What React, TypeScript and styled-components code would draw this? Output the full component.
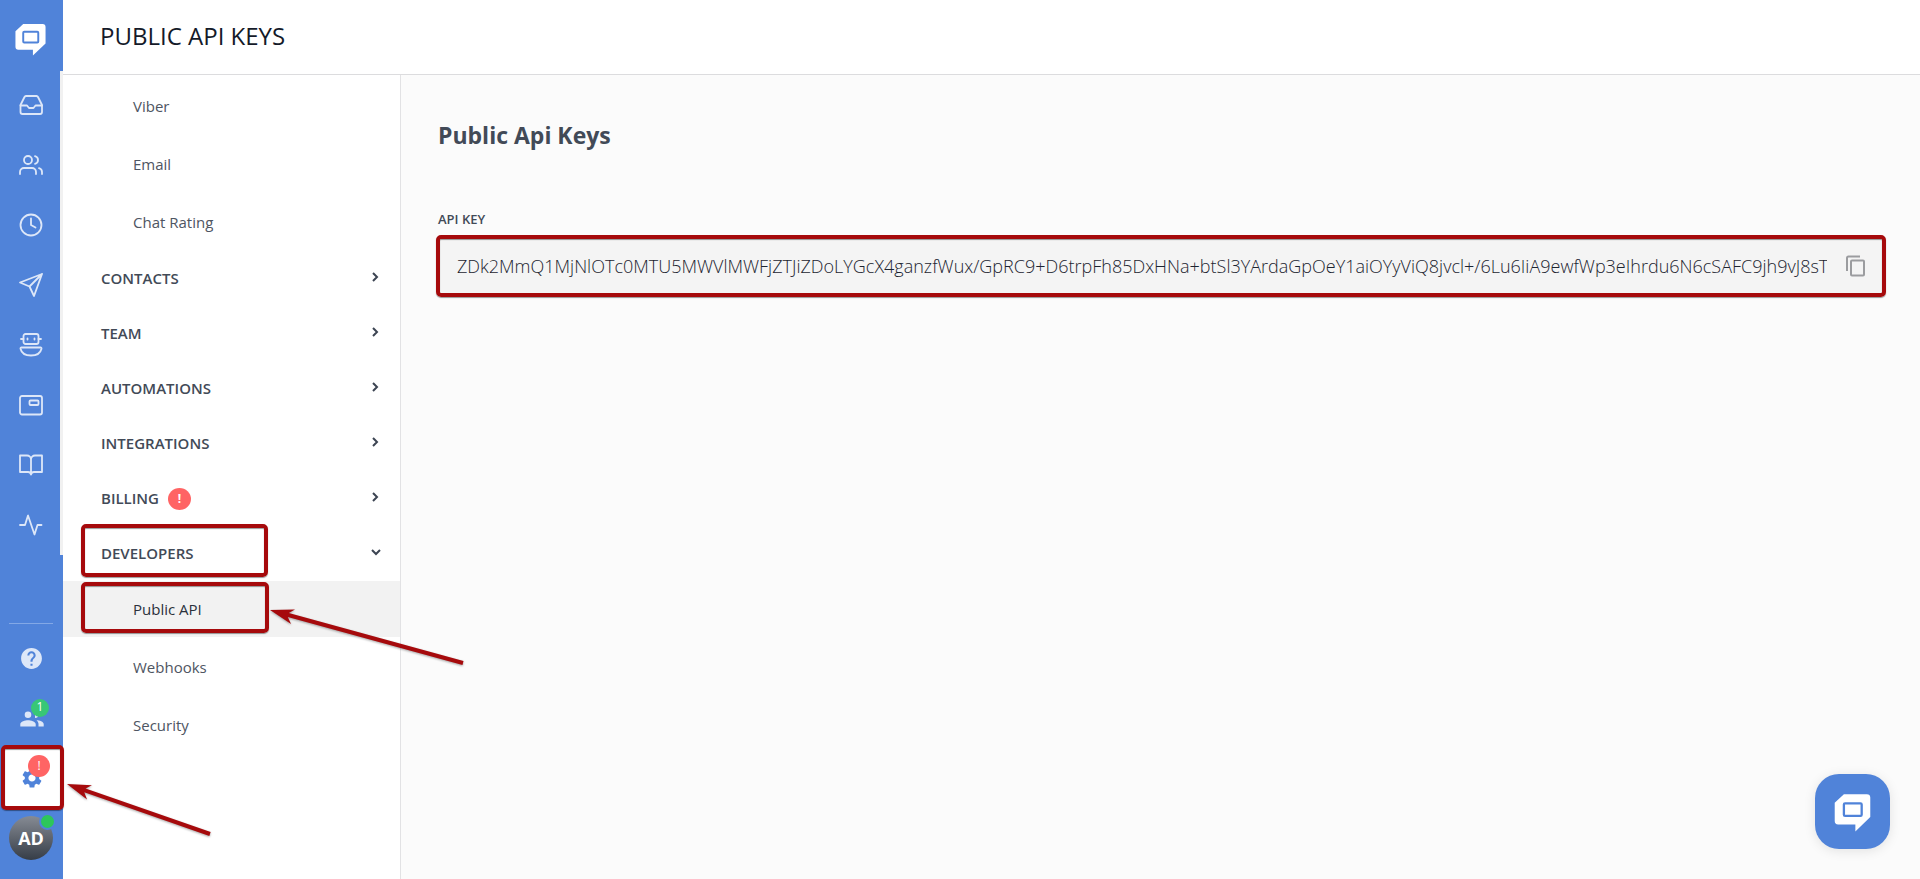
import React from 'react';
import styled, { createGlobalStyle, css } from 'styled-components';

const GlobalStyle = createGlobalStyle`
  *, *::before, *::after { box-sizing: border-box; }
  html, body, #root { height: 100%; }
  body {
    margin: 0;
    background: #fbfbfb;
    color: #424a57;
    font-family: 'Open Sans', 'Noto Sans', sans-serif;
  }
  button, input { font: inherit; color: inherit; }
`;

const BLUE = '#5083d9';
const RED = '#a60a0c';

const Page = styled.div`
  display: flex;
  min-height: 100vh;
  position: relative;
`;

const Rail = styled.nav`
  flex: none;
  width: 63px;
  background: ${BLUE};
  display: flex;
  flex-direction: column;
  padding-bottom: 11px;
`;

const LogoLink = styled.a`
  height: 71px;
  flex: none;
  display: flex;
  align-items: center;
  justify-content: center;
  padding-top: 7px;
  padding-right: 2px;
`;

const RailMenu = styled.div`
  display: flex;
  flex-direction: column;
  padding-top: 4px;
  border-right: 3px solid #f1f1f1;
`;

const RailFooter = styled.div`
  margin-top: auto;
  display: flex;
  flex-direction: column;
`;

const RailDivider = styled.hr`
  width: 44px;
  height: 1px;
  margin: 0 0 4px 9px;
  border: 0;
  background: #83a8e6;
`;

const RailButton = styled.button<{ $active?: boolean; $wide?: boolean }>`
  position: relative;
  height: 60px;
  padding: 0;
  padding-left: ${(p) => (p.$wide ? '0' : '2px')};
  border: 0;
  background: ${(p) => (p.$active ? '#fff' : 'transparent')};
  box-shadow: ${(p) => (p.$active ? `inset 2px 0 0 ${BLUE}` : 'none')};
  color: ${(p) => (p.$active ? BLUE : '#dde7f8')};
  display: flex;
  align-items: center;
  justify-content: center;
  cursor: pointer;
`;

const Badge = styled.span<{ $tone: 'green' | 'red' }>`
  position: absolute;
  display: flex;
  align-items: center;
  justify-content: center;
  border-radius: 50%;
  color: #fff;
  font-size: 12px;
  line-height: 1;
  ${(p) =>
    p.$tone === 'green'
      ? css`
          width: 18px;
          height: 18px;
          left: 31px;
          top: 11px;
          background: #38c776;
          padding-bottom: 2px;
        `
      : css`
          width: 22px;
          height: 22px;
          left: 28px;
          top: 7px;
          background: #ff6464;
        `}
`;

const Avatar = styled.span`
  width: 44px;
  height: 44px;
  margin-right: 1px;
  border-radius: 50%;
  background: linear-gradient(#868b94, #363d47);
  color: #fff;
  font-size: 18px;
  font-weight: 700;
  display: flex;
  align-items: center;
  justify-content: center;
`;

const Online = styled.span`
  position: absolute;
  left: 39px;
  top: 5px;
  width: 17px;
  height: 17px;
  border: 2px solid ${BLUE};
  border-radius: 50%;
  background: #2dc65b;
`;

const Workspace = styled.div`
  flex: 1;
  min-width: 0;
  display: flex;
  flex-direction: column;
`;

const TopBar = styled.header`
  height: 75px;
  flex: none;
  padding: 0 37px 2px;
  display: flex;
  align-items: center;
  background: #fff;
  border-bottom: 1px solid #dcdcde;
`;

const PageTitle = styled.h1`
  margin: 0;
  color: #141a29;
  font-size: 24px;
  font-weight: 400;
  line-height: 32px;
`;

const Body = styled.div`
  flex: 1;
  display: flex;
`;

const Sidebar = styled.aside`
  flex: none;
  width: 338px;
  padding-top: 3px;
  background: #fff;
  border-right: 1px solid #e2e2e4;
`;

const SubList = styled.div`
  display: flex;
  flex-direction: column;
  gap: 2px;
  margin-bottom: 1px;
`;

const SubLink = styled.a<{ $active?: boolean }>`
  position: relative;
  height: 56px;
  padding-left: 70px;
  display: flex;
  align-items: center;
  font-size: 15px;
  line-height: 20px;
  text-decoration: none;
  color: ${(p) => (p.$active ? '#2b313b' : '#4e5562')};
  background: ${(p) => (p.$active ? '#f2f2f2' : 'transparent')};
`;

const Section = styled.button`
  position: relative;
  width: 100%;
  height: 55px;
  padding: 0 16px 2px 38px;
  border: 0;
  background: none;
  display: flex;
  align-items: center;
  gap: 9px;
  font-size: 15px;
  font-weight: 600;
  line-height: 20px;
  cursor: pointer;
`;

const Alert = styled.span`
  width: 23px;
  height: 22px;
  margin-top: 2px;
  border-radius: 50%;
  background: #ff6464;
  color: #fff;
  font-size: 12px;
  font-weight: 700;
  line-height: 22px;
  text-align: center;
`;

const Chevron = styled.svg`
  margin: 0 2px 2px auto;
`;

const Main = styled.main`
  flex: 1;
  min-width: 0;
  padding: 44px 36px 40px 37px;
`;

const Heading = styled.h2`
  margin: 0;
  font-size: 23px;
  font-weight: 700;
  line-height: 32px;
`;

const Label = styled.label`
  display: block;
  margin: 59px 0 10px;
  font-size: 13px;
  font-weight: 600;
  line-height: 18px;
`;

const KeyField = styled.div`
  position: relative;
  height: 56px;
  padding: 0 16px 0 18px;
  display: flex;
  align-items: center;
  gap: 18px;
  background: #f4f4f4;
  border: 1px solid #d2d2d4;
`;

const KeyInput = styled.input`
  flex: 1;
  min-width: 0;
  height: 40px;
  padding: 0;
  border: 0;
  outline: 0;
  background: transparent;
  color: #1c2430;
  font-size: 18px;
  font-weight: 300;
`;

const CopyButton = styled.button`
  padding: 0;
  border: 0;
  background: none;
  display: flex;
  cursor: pointer;
`;

const Frame = styled.span<{ $inset: string }>`
  position: absolute;
  inset: ${(p) => p.$inset};
  border: 4px solid ${RED};
  border-radius: 5px;
  box-shadow: 0 1px 1px rgba(0, 0, 0, 0.4), inset 0 1px 1px rgba(0, 0, 0, 0.4);
  pointer-events: none;
  z-index: 2;
`;

const ArrowSvg = styled.svg`
  position: absolute;
  left: 100%;
  top: 50%;
  overflow: visible;
  filter: drop-shadow(0 1px 1px rgba(0, 0, 0, 0.35));
`;

const ChatButton = styled.button`
  position: fixed;
  right: 30px;
  bottom: 30px;
  width: 75px;
  height: 75px;
  padding: 2px 0 0;
  border: 0;
  border-radius: 24px;
  background: ${BLUE};
  box-shadow: 0 2px 12px rgba(0, 0, 0, 0.1);
  display: flex;
  align-items: center;
  justify-content: center;
  cursor: pointer;
`;

const Logo = ({ size }: { size: number }) => (
  <svg width={size} height={size} viewBox="0 0 32 34" aria-hidden="true">
    <path
      d="M8.500 1H28.500Q31.500 1 31.500 4V21L18.500 33.500V27.500H3.500Q.500 27.500 .500 24.500V8.500Z"
      fill="#fff"
    />
    <rect x="8.500" y="9" width="15.500" height="11" rx="1" fill="#fff" stroke={BLUE} strokeWidth="2" />
  </svg>
);

const icons: Record<string, React.ReactNode> = {
  Inbox: (
    <>
      <path d="M23 12.500h-6.500L14.500 15h-4.500L8 12.500H1.500" />
      <path d="M5.500 4 1.500 12v7a2 2 0 0 0 2 2h17.500a2 2 0 0 0 2-2v-7L19 4a2 2 0 0 0-1.500-1H7a2 2 0 0 0-1.500 1z" />
    </>
  ),
  Contacts: (
    <>
      <circle cx="9" cy="7" r="4" />
      <path d="M17 21v-2a4 4 0 0 0-4-4H5a4 4 0 0 0-4 4v2M23 21v-2a4 4 0 0 0-3-3.870M16 3.130a4 4 0 0 1 0 7.750" />
    </>
  ),
  History: (
    <>
      <circle cx="12" cy="12" r="10.500" />
      <path d="M12 5.500v6.500l4.500 2.500" />
    </>
  ),
  Campaigns: (
    <path d="M23 1 15 23 10.500 13.500 1 9.500ZM23 1 10.500 13.500" />
  ),
  Bots: (
    <>
      <rect x="4.500" y="1" width="15" height="10" rx="2" />
      <path d="M2 6h2.500M19.500 6H22M2.500 14.500h19a1 1 0 0 1 1 1.200C21.500 20 18 22.500 12 22.500S2.500 20 1.500 15.700a1 1 0 0 1 1-1.200z" />
      <path d="M8.500 5.500v1M15.500 5.500v1" />
    </>
  ),
  Widgets: (
    <>
      <rect x="1" y="3" width="22" height="18.500" rx="2" />
      <rect x="10.500" y="7.500" width="9" height="4.500" rx="1" />
    </>
  ),
  Knowledge: (
    <path d="M1 2.500h7a4 4 0 0 1 4 4v15a3 3 0 0 0-3-2.500H1zM23 2.500h-7a4 4 0 0 0-4 4v15a3 3 0 0 1 3-2.500h8z" />
  ),
  Reports: <path d="M22.500 12h-4l-3 9.500L9 2.500 6 12H1" />,
};

const NavIcon = ({ name }: { name: string }) => (
  <svg
    width="24"
    height="24"
    viewBox="0 0 24 24"
    fill="none"
    stroke="currentColor"
    strokeWidth="1.8"
    strokeLinecap="round"
    strokeLinejoin="round"
    aria-hidden="true"
  >
    {icons[name]}
  </svg>
);

const SolidIcon = ({ d, size = 24 }: { d: string; size?: number }) => (
  <svg width={size} height={size} viewBox="0 0 24 24" fill="currentColor" aria-hidden="true">
    <path d={d} />
  </svg>
);

const HELP =
  'M12 2C6.480 2 2 6.480 2 12s4.480 10 10 10 10-4.480 10-10S17.520 2 12 2zm1 17h-2v-2h2v2zm2.070-7.750l-.9.920C13.450 12.900 13 13.500 13 15h-2v-.5c0-1.100.450-2.100 1.170-2.830l1.240-1.260c.370-.360.590-.860.590-1.410 0-1.100-.9-2-2-2s-2 .9-2 2H8c0-2.210 1.790-4 4-4s4 1.790 4 4c0 .880-.360 1.680-.930 2.250z';
const GROUP =
  'M8 5.500a3.300 3.300 0 1 0 0 6.600 3.300 3.300 0 0 0 0-6.600zM8 14.200c-2.700 0-7.700 1.300-7.700 3.800V20.500h15.400V18c0-2.500-5-3.800-7.700-3.800zM16.500 14.200c1.200.9 2 2.200 2 3.800v2.500h5.200V18c0-2.500-4.300-3.800-7.200-3.800zM15 12.100a3.300 3.300 0 0 0 0-6.600z';
const GEAR =
  'M19.140 12.940c.040-.3.060-.61.060-.94 0-.32-.02-.64-.07-.94l2.030-1.580c.18-.14.23-.41.12-.61l-1.920-3.320c-.12-.22-.37-.29-.59-.22l-2.390.96c-.5-.38-1.030-.7-1.620-.94l-.36-2.540c-.04-.24-.24-.41-.48-.41h-3.840c-.24 0-.43.17-.47.41l-.36 2.540c-.59.24-1.130.57-1.620.94l-2.390-.96c-.22-.08-.47 0-.59.22L2.740 8.870c-.12.21-.08.47.12.61l2.030 1.580c-.05.3-.09.63-.09.94s.02.64.07.94l-2.030 1.580c-.18.14-.23.41-.12.61l1.920 3.320c.12.22.37.29.59.22l2.390-.96c.5.38 1.030.7 1.620.94l.36 2.540c.05.24.24.41.48.41h3.840c.24 0 .44-.17.47-.41l.36-2.540c.59-.24 1.130-.56 1.620-.94l2.390.96c.22.08.47 0 .59-.22l1.920-3.320c.12-.22.07-.47-.12-.61l-2.010-1.580zM12 15.600c-1.980 0-3.600-1.620-3.600-3.600s1.620-3.600 3.600-3.600 3.600 1.620 3.600 3.600-1.620 3.600-3.600 3.600z';

const Arrow = ({ dx, dy, left, top }: { dx: number; dy: number; left: number; top: number }) => {
  const angle = (Math.atan2(dy, dx) * 180) / Math.PI;
  const length = Math.hypot(dx, dy);
  return (
    <ArrowSvg width="1" height="1" aria-hidden="true">
      <g transform={`translate(${left} ${top}) rotate(${angle})`} fill={RED}>
        <path d={`M0 0 24-7 19-2H${length}V2H19L24 8Z`} />
      </g>
    </ArrowSvg>
  );
};

const ChevronIcon = ({ open }: { open?: boolean }) => (
  <Chevron width="14" height="14" viewBox="0 0 14 14" fill="none" stroke="#3c4452" strokeWidth="2" aria-hidden="true">
    <path d={open ? 'M4 5l4 4L12 5' : 'M5 3 9 7 5 11'} />
  </Chevron>
);

const API_KEY =
  'ZDk2MmQ1MjNlOTc0MTU5MWVlMWFjZTJiZDoLYGcX4ganzfWux/GpRC9+D6trpFh85DxHNa+btSl3YArdaGpOeY1aiOYyViQ8jvcl+/6Lu6IiA9ewfWp3eIhrdu6N6cSAFC9jh9vJ8sT';

export default function App() {
  return (
    <Page>
      <GlobalStyle />
      <Rail aria-label="Main">
        <LogoLink href="#" aria-label="Home">
          <Logo size={33} />
        </LogoLink>
        <RailMenu>
          {Object.keys(icons).map((name) => (
            <RailButton key={name} type="button" aria-label={name}>
              <NavIcon name={name} />
            </RailButton>
          ))}
        </RailMenu>
        <RailFooter>
          <RailDivider />
          <RailButton $wide type="button" aria-label="Help">
            <SolidIcon d={HELP} size={25} />
          </RailButton>
          <RailButton $wide type="button" aria-label="Team online">
            <SolidIcon d={GROUP} />
            <Badge $tone="green">1</Badge>
          </RailButton>
          <RailButton $wide $active type="button" aria-label="Settings">
            <SolidIcon d={GEAR} />
            <Badge $tone="red">!</Badge>
            <Frame $inset="-3px -1px -2px 1px">
              <Arrow dx={143} dy={50} left={7} top={6} />
            </Frame>
          </RailButton>
          <RailButton $wide type="button" aria-label="Account">
            <Avatar>AD</Avatar>
            <Online />
          </RailButton>
        </RailFooter>
      </Rail>
      <Workspace>
        <TopBar>
          <PageTitle>PUBLIC API KEYS</PageTitle>
        </TopBar>
        <Body>
          <Sidebar>
            <SubList>
              <SubLink href="#viber">Viber</SubLink>
              <SubLink href="#email">Email</SubLink>
              <SubLink href="#rating">Chat Rating</SubLink>
            </SubList>
            {['CONTACTS', 'TEAM', 'AUTOMATIONS', 'INTEGRATIONS', 'BILLING'].map((name) => (
              <Section key={name} type="button">
                {name}
                {name === 'BILLING' && <Alert>!</Alert>}
                <ChevronIcon />
              </Section>
            ))}
            <Section type="button" aria-expanded="true">
              DEVELOPERS
              <ChevronIcon open />
              <Frame $inset="-2px 132px 4px 18px" />
            </Section>
            <SubList>
              <SubLink $active href="#api">
                Public API
                <Frame $inset="1px 131px 4px 18px">
                  <Arrow dx={193} dy={53} left={5} top={2} />
                </Frame>
              </SubLink>
              <SubLink href="#webhooks">Webhooks</SubLink>
              <SubLink href="#security">Security</SubLink>
            </SubList>
          </Sidebar>
          <Main>
            <Heading>Public Api Keys</Heading>
            <Label htmlFor="api-key">API KEY</Label>
            <KeyField>
              <KeyInput id="api-key" readOnly value={API_KEY} />
              <CopyButton type="button" aria-label="Copy">
                <svg width="22" height="24" viewBox="0 0 22 24" fill="none" stroke="#9b9c9f" strokeWidth="2" aria-hidden="true">
                  <path d="M2 17V4Q2 2.500 3.500 2.500H15" />
                  <rect x="6" y="6.500" width="13" height="15" rx="1" />
                </svg>
              </CopyButton>
              <Frame $inset="-4px -3px" />
            </KeyField>
          </Main>
        </Body>
      </Workspace>
      <ChatButton type="button" aria-label="Open chat">
        <Logo size={39} />
      </ChatButton>
    </Page>
  );
}
